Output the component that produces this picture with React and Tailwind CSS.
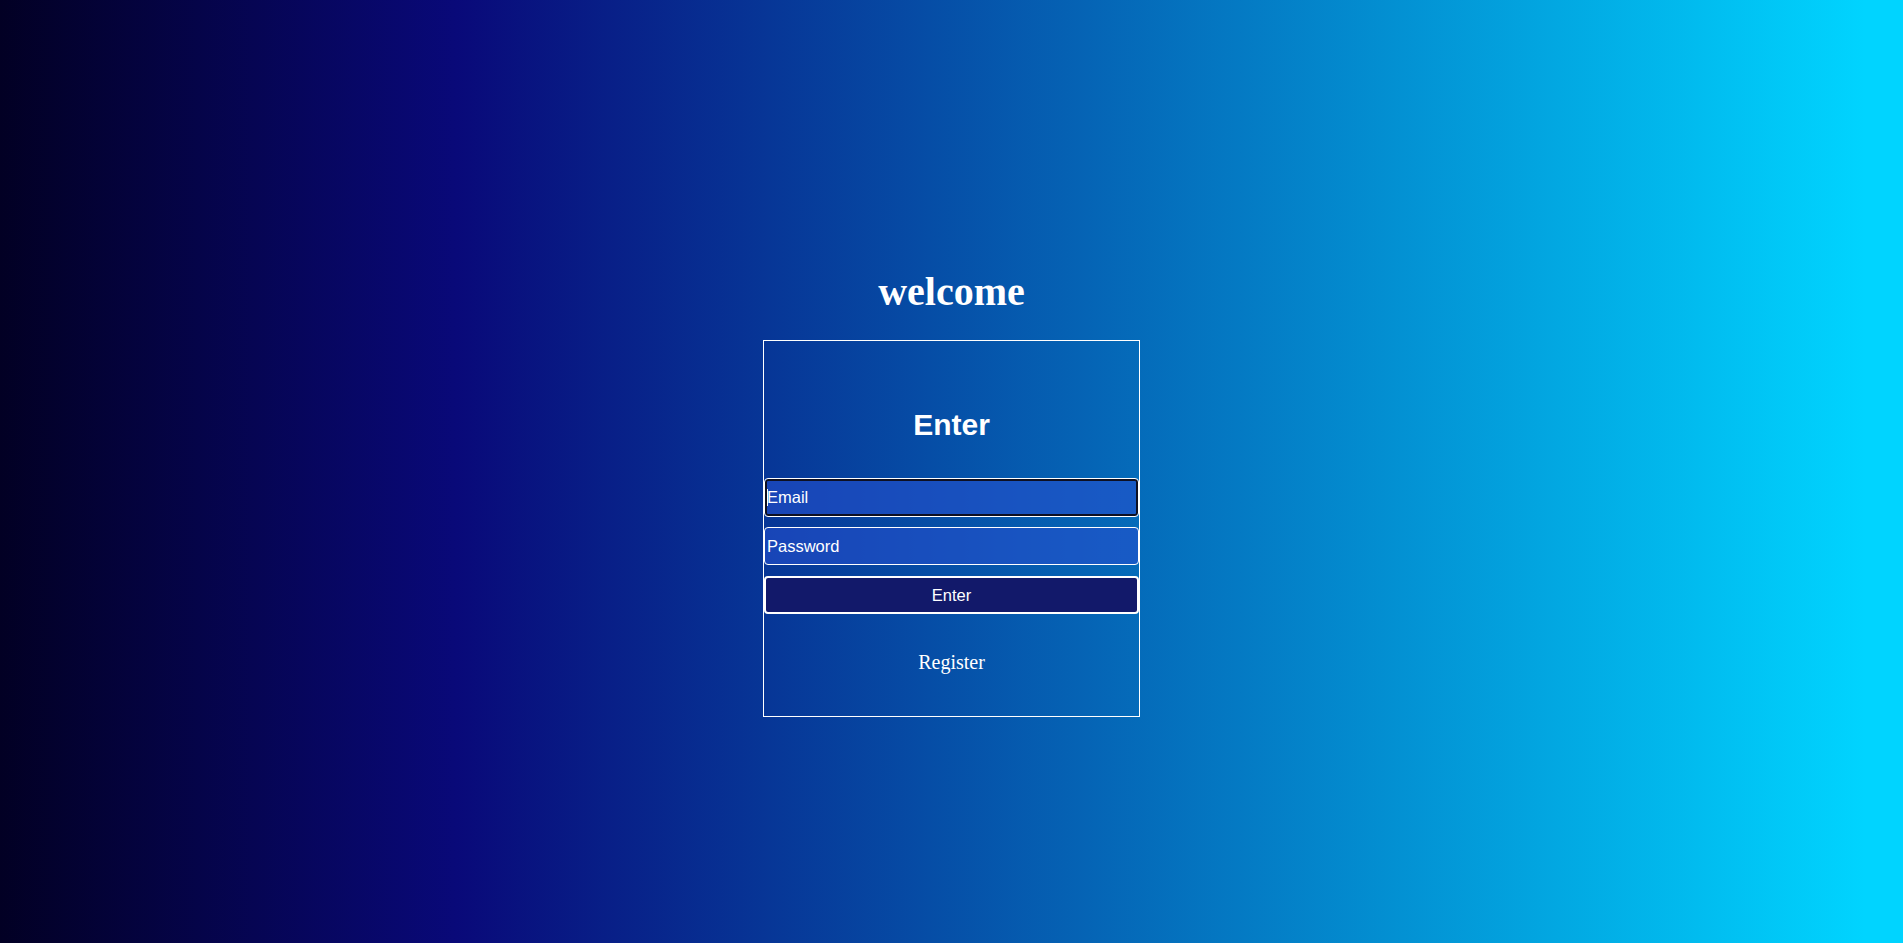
import React from "react";

export default function App() {
  return (
    <div className="h-screen w-full overflow-hidden bg-[linear-gradient(90deg,#020024_0%,#090979_24%,#00d4ff_98%)] flex flex-col items-center pt-[269px]">
      <h1 className="font-['Liberation_Serif',serif] font-bold text-[40px] leading-[46px] text-white">
        welcome
      </h1>
      <div className="mt-[25px] w-[377px] h-[377px] border border-white flex flex-col">
        <h2 className="mt-[67px] text-center font-['Liberation_Sans',Arial,sans-serif] font-bold text-[30px] leading-[34px] text-white">
          Enter
        </h2>
        <div className="relative mt-[36px] h-[39px]">
          <input
            type="email"
            placeholder="Email"
            className="block w-full h-[39px] px-[2px] border border-white rounded-[4px] bg-[rgba(37,80,205,0.6)] shadow-[inset_0_0_0_2px_#0e1022] outline-none font-['Liberation_Sans',Arial,sans-serif] text-[16.5px] text-white placeholder:text-white"
          />
          <span className="absolute left-[3px] top-[11px] h-[17px] w-px bg-white" />
        </div>
        <input
          type="password"
          placeholder="Password"
          className="mt-[10px] block w-full h-[38px] px-[2px] border border-white rounded-[4px] bg-[rgba(37,80,205,0.6)] outline-none font-['Liberation_Sans',Arial,sans-serif] text-[16.5px] text-white placeholder:text-white"
        />
        <button className="mt-[11px] block w-full h-[38px] border-2 border-white rounded-[4px] bg-[#12196a] font-['Liberation_Sans',Arial,sans-serif] text-[16.5px] text-white">
          Enter
        </button>
        <p className="mt-[37px] text-center font-['Liberation_Serif',serif] text-[20px] leading-[23px] text-white cursor-pointer">
          Register
        </p>
      </div>
    </div>
  );
}
